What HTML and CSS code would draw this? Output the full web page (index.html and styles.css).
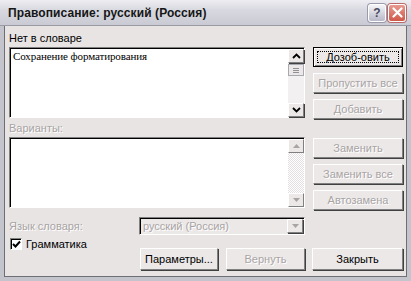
FILE: index.html
```html
<!DOCTYPE html>
<html>
<head>
<meta charset="utf-8">
<link rel="stylesheet" href="styles.css">
</head>
<body>
<div class="window">
  <div class="titlebar">
    <span class="title">Правописание: русский (Россия)</span>
    <div class="tbtns">
      <span class="tbtn help">?</span>
      <span class="tbtn close">
        <svg width="11" height="11" viewBox="0 0 11 11"><path d="M1.5 1.5 L9.5 9.5 M9.5 1.5 L1.5 9.5" stroke="#fff" stroke-width="2.2" stroke-linecap="round"/></svg>
      </span>
    </div>
  </div>
  <div class="body">
    <div class="section">
      <div class="label">Нет в словаре</div>
      <div></div>
      <div class="box">
        <div class="boxtext">Сохранение форматирования</div>
        <div class="scroll">
          <span class="sbtn"><svg width="9" height="6" viewBox="0 0 9 6"><path d="M1 5 L4.5 1.5 L8 5" fill="none" stroke="#000" stroke-width="1.8"/></svg></span>
          <span class="thumb"><i></i><i></i><i></i></span>
          <span class="track"></span>
          <span class="sbtn"><svg width="9" height="6" viewBox="0 0 9 6"><path d="M1 1 L4.5 4.5 L8 1" fill="none" stroke="#000" stroke-width="1.8"/></svg></span>
        </div>
      </div>
      <div class="btncol">
        <span class="btn default"><span class="focus">Дозоб-овить</span></span>
        <span class="btn dis">Пропустить все</span>
        <span class="btn dis">Добавить</span>
      </div>
    </div>
    <div class="section sec2">
      <div class="label dis">Варианты:</div>
      <div></div>
      <div class="box">
        <div class="boxtext"></div>
        <div class="scroll off">
          <span class="sbtn"><svg width="7" height="4" viewBox="0 0 7 4"><path d="M0 4 L3.5 0 L7 4 Z" fill="#a8a4a4"/></svg></span>
          <span class="track dither"></span>
          <span class="sbtn"><svg width="7" height="4" viewBox="0 0 7 4"><path d="M0 0 L3.5 4 L7 0 Z" fill="#a8a4a4"/></svg></span>
        </div>
      </div>
      <div class="btncol">
        <span class="btn dis">Заменить</span>
        <span class="btn dis">Заменить все</span>
        <span class="btn dis">Автозамена</span>
      </div>
    </div>
    <div class="langrow">
      <span class="label dis langlabel">Язык словаря:</span>
      <div class="combo">
        <span class="combotext dis">русский (Россия)</span>
        <span class="sbtn cbtn"><svg width="7" height="4" viewBox="0 0 7 4"><path d="M0 0 L3.5 4 L7 0 Z" fill="#a8a4a4"/></svg></span>
      </div>
    </div>
    <div class="bottomrow">
      <label class="check">
        <span class="cbox"><svg width="9" height="9" viewBox="0 0 9 9"><path d="M1 4 L3.5 6.5 L8 1.5" fill="none" stroke="#000" stroke-width="2"/></svg></span>
        <span>Грамматика</span>
      </label>
      <span class="btn b1">Параметры...</span>
      <span class="btn dis b2">Вернуть</span>
      <span class="btn b3">Закрыть</span>
    </div>
  </div>
</div>
</body>
</html>
```
FILE: styles.css
```css
* { box-sizing: border-box; }
html, body { margin: 0; padding: 0; }
body { width: 411px; height: 281px; overflow: hidden; background: #e6e2e2; }

.window {
  width: 411px; height: 281px;
  background: #e8e4e4;
  border-left: 4px solid #c4c4cc;
  border-right: 4px solid #c4c4cc;
  border-bottom: 4px solid #c4c4cc;
  box-shadow: inset 1px 0 0 #6e6e76, inset -1px 0 0 #6e6e76, inset 0 -1px 0 #6e6e76;
  font-family: "Liberation Sans", Arial, sans-serif;
  font-size: 11px;
  color: #000;
  position: relative;
}

.titlebar {
  height: 26px;
  margin: 0 -4px;
  padding: 0 4px 0 8px;
  display: flex;
  align-items: center;
  justify-content: space-between;
  background: linear-gradient(#eeeef2, #d8d8e0 40%, #cacad4);
  border-bottom: 1px solid #9a9aa4;
}
.title {
  font-weight: bold;
  font-size: 12px;
  color: #161616;
  letter-spacing: 0.1px;
}
.tbtns { display: flex; gap: 2px; margin-right: 1px; }
.tbtn {
  width: 18px; height: 18px;
  border-radius: 3px;
  display: flex; align-items: center; justify-content: center;
  border: 1px solid #fff;
}
.help {
  background: linear-gradient(#f4f4f8, #b8b8c8);
  color: #4a4a5e;
  font-weight: bold;
  font-size: 12px;
  box-shadow: 0 0 0 1px #9a9aaa;
}
.close {
  background: linear-gradient(#e89a90, #d05848);
  box-shadow: 0 0 0 1px #b86a6a;
}

.body { padding: 0 0 0 5px; }

.section {
  display: grid;
  grid-template-columns: 296px 90px;
  grid-template-rows: 16px 71px;
  column-gap: 8px;
  margin-top: 5px;
}
.sec2 { margin-top: 0; grid-template-rows: 19px 71px; }
.sec2 .label { padding-top: 3px; }
.label { line-height: 14px; white-space: nowrap; }
.dis { color: #a8a4a4; text-shadow: 1px 1px 0 #fff; }

.box {
  display: flex;
  background: #fff;
  border-top: 1px solid #808080;
  border-left: 1px solid #808080;
  border-right: 1px solid #fff;
  border-bottom: 1px solid #fff;
  box-shadow: inset 1px 1px 0 #000;
}
.boxtext {
  flex: 1;
  padding: 2px 0 0 3px;
  font-family: "Liberation Serif", "Times New Roman", serif;
  font-size: 11px;
  letter-spacing: -0.1px;
  line-height: 13px;
}
.scroll {
  width: 16px;
  margin: 1px 0 0 0;
  display: flex;
  flex-direction: column;
  background: #f2f0f0;
}
.sbtn {
  width: 16px; height: 14px;
  flex: none;
  display: flex; align-items: center; justify-content: center;
  background: #ece8e8;
  border-top: 1px solid #fff;
  border-left: 1px solid #fff;
  border-right: 1px solid #808080;
  border-bottom: 1px solid #808080;
  box-shadow: 1px 1px 0 #404040;
}
.thumb {
  height: 12px; flex: none;
  margin-top: 1px;
  background: #ece8e8;
  border: 1px solid #a8a8b0;
  display: flex; flex-direction: column; align-items: center; justify-content: center; gap: 1px;
}
.thumb i { display: block; width: 6px; height: 1px; background: #909098; }
.track { flex: 1; }
.dither {
  background-color: #fff;
  background-image: repeating-conic-gradient(#e4e0e0 0 25%, #fff 0 50%);
  background-size: 2px 2px;
}
.off .sbtn { box-shadow: none; }

.btncol {
  display: flex;
  flex-direction: column;
  gap: 6px;
  align-self: start;
}
.sec2 .btncol { margin-top: 1px; }
.btn {
  height: 20px;
  display: flex; align-items: center; justify-content: center;
  background: #ece8e8;
  border-top: 1px solid #fff;
  border-left: 1px solid #fff;
  border-right: 1px solid #808080;
  border-bottom: 1px solid #808080;
  box-shadow: 1px 1px 0 #404040;
  white-space: nowrap;
}
.btn.default {
  border: 1px solid #000;
  box-shadow: inset 1px 1px 0 #fff, inset -1px -1px 0 #808080;
  padding: 3px;
}
.focus {
  flex: 1; align-self: stretch;
  display: flex; align-items: center; justify-content: center;
  outline: 1px dotted #000;
  outline-offset: -1px;
}

.langrow {
  display: flex;
  align-items: center;
  margin-top: 9px;
  height: 18px;
}
.langlabel { width: 130px; }
.combo {
  width: 166px; height: 18px;
  display: flex;
  align-items: center;
  background: #ece8e8;
  border-top: 1px solid #808080;
  border-left: 1px solid #808080;
  border-right: 1px solid #fff;
  border-bottom: 1px solid #fff;
  box-shadow: inset 1px 1px 0 #000;
  padding: 1px 1px 1px 3px;
}
.combotext { flex: 1; }
.cbtn { height: 14px; }

.bottomrow {
  display: flex;
  align-items: flex-start;
  margin-top: 3px;
}
.check {
  width: 131px;
  display: flex; align-items: center; gap: 4px;
  padding-left: 1px;
}
.cbox {
  width: 12px; height: 12px;
  background: #fff;
  border-top: 1px solid #808080;
  border-left: 1px solid #808080;
  border-right: 1px solid #fff;
  border-bottom: 1px solid #fff;
  box-shadow: inset 1px 1px 0 #000;
  display: flex; align-items: center; justify-content: center;
}
.b1, .b2, .b3 { margin-top: 10px; height: 22px; }
.b1 { width: 78px; }
.b2 { width: 79px; margin-left: 8px; }
.b3 { width: 91px; margin-left: 7px; }
```
